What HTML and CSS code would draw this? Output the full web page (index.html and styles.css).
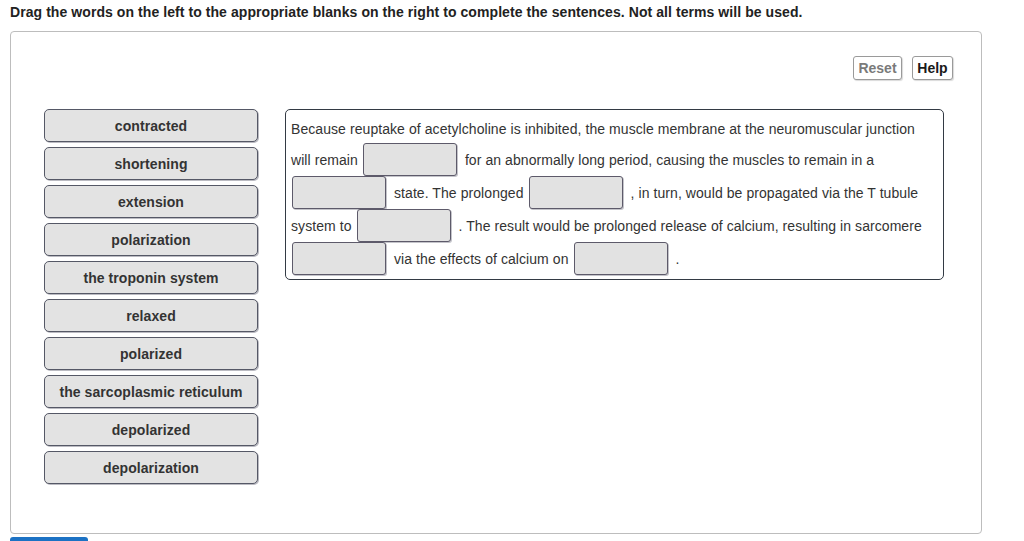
FILE: index.html
```html
<!DOCTYPE html>
<html lang="en">
<head>
<meta charset="utf-8">
<title>Drag and drop</title>
<link rel="stylesheet" href="styles.css">
</head>
<body>
<p class="prompt">Drag the words on the left to the appropriate blanks on the right to complete the sentences. Not all terms will be used.</p>
<div class="panel">
  <div class="toolbar">
    <button class="tool reset">Reset</button>
    <button class="tool help">Help</button>
  </div>
  <div class="content">
    <div class="bank">
      <div class="tile">contracted</div>
      <div class="tile">shortening</div>
      <div class="tile">extension</div>
      <div class="tile">polarization</div>
      <div class="tile">the troponin system</div>
      <div class="tile">relaxed</div>
      <div class="tile">polarized</div>
      <div class="tile">the sarcoplasmic reticulum</div>
      <div class="tile">depolarized</div>
      <div class="tile">depolarization</div>
    </div>
    <div class="sentence">
      <div class="row first"><span>Because reuptake of acetylcholine is inhibited, the muscle membrane at the neuromuscular junction</span></div>
      <div class="row"><span>will remain</span><span class="blank"></span><span>for an abnormally long period, causing the muscles to remain in a</span></div>
      <div class="row"><span class="blank lead"></span><span>state. The prolonged</span><span class="blank"></span><span>, in turn, would be propagated via the T tubule</span></div>
      <div class="row"><span>system to</span><span class="blank"></span><span>. The result would be prolonged release of calcium, resulting in sarcomere</span></div>
      <div class="row"><span class="blank lead"></span><span>via the effects of calcium on</span><span class="blank"></span><span>.</span></div>
    </div>
  </div>
</div>
<button class="submit" aria-label="Submit"></button>
</body>
</html>
```

FILE: styles.css
```css
html, body {
  margin: 0;
  padding: 0;
  background: #fff;
}
body {
  padding: 4px 0 0 10px;
  font-family: "Liberation Sans", Arial, sans-serif;
  letter-spacing: 0.07px;
  color: #333;
  overflow: hidden;
}
.prompt {
  margin: 0;
  font-size: 14px;
  line-height: 16px;
  font-weight: bold;
  color: #222;
}
.panel {
  box-sizing: border-box;
  width: 972px;
  height: 503px;
  margin-top: 11px;
  border: 1px solid #bdbdbd;
  border-radius: 4px;
  padding: 24px 28px 0 33px;
}
.toolbar {
  display: flex;
  justify-content: flex-end;
  gap: 10px;
}
.tool {
  box-sizing: border-box;
  height: 24px;
  padding: 0 4px;
  background: #fff;
  border: 1px solid #9a9a9a;
  border-radius: 3px;
  box-shadow: 1px 1px 1px rgba(0,0,0,0.15);
  font-family: "Liberation Sans", Arial, sans-serif;
  font-size: 14px;
  font-weight: bold;
}
.reset { color: #7a7a7a; width: 49px; }
.help { color: #1a1a1a; width: 41px; }
.content {
  display: flex;
  align-items: flex-start;
  gap: 27px;
  margin-top: 29px;
}
.bank {
  display: flex;
  flex-direction: column;
  gap: 5px;
  width: 214px;
}
.tile {
  box-sizing: border-box;
  height: 33px;
  line-height: 32px;
  text-align: center;
  background: #e3e3e3;
  border: 1px solid #555866;
  border-radius: 5px;
  box-shadow: 1px 1px 0 rgba(60,60,80,0.35);
  font-size: 14px;
  font-weight: bold;
  color: #333;
}
.sentence {
  box-sizing: border-box;
  width: 659px;
  border: 1px solid #333a44;
  border-radius: 5px;
  padding: 4px 5px 4px 5px;
  font-size: 14px;
  color: #333;
}
.row {
  display: flex;
  align-items: center;
  height: 33px;
  white-space: nowrap;
}
.row.first {
  height: 29px;
}
.blank {
  box-sizing: border-box;
  width: 94px;
  height: 33px;
  margin: 0 8px 0 5px;
  background: #e2e2e2;
  border: 1px solid #5d5a6a;
  border-radius: 3px;
  box-shadow: 1px 1px 0 rgba(60,60,80,0.3);
}
.blank.lead {
  margin-left: 1px;
}
.submit {
  display: block;
  width: 78px;
  height: 32px;
  margin-top: 3px;
  padding: 0;
  background: #1c72c4;
  border: none;
  border-radius: 3px;
}
```
